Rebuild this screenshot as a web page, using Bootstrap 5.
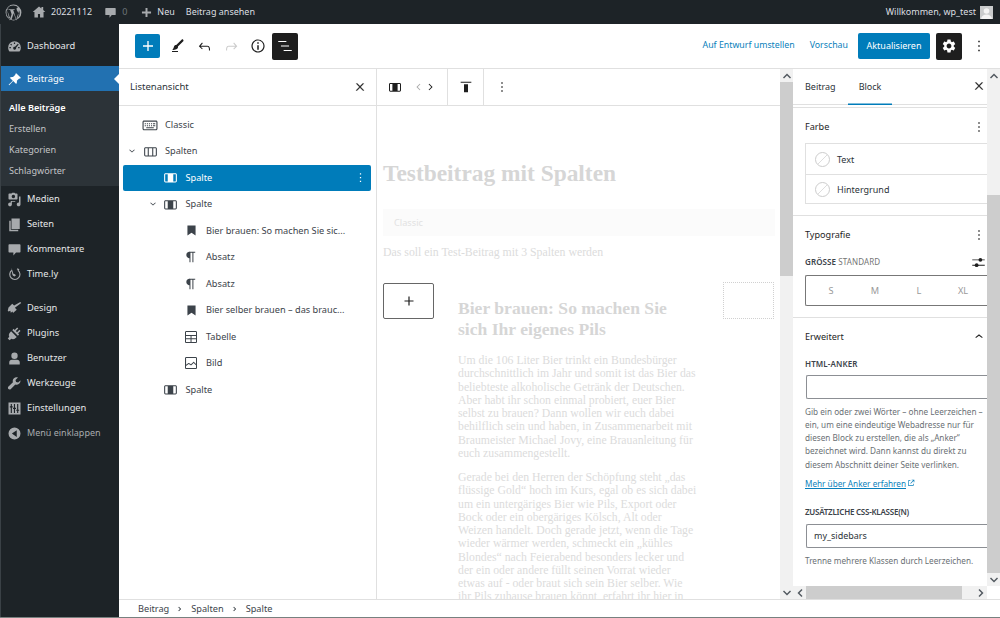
<!DOCTYPE html>
<html lang="de">
<head>
<meta charset="UTF-8">
<title>Beitrag bearbeiten</title>
<link href="https://cdn.jsdelivr.net/npm/bootstrap@5.3.0/dist/css/bootstrap.min.css" rel="stylesheet">
<style>
html, body { height: 618px; overflow: hidden; }
body { font-family: "Noto Sans", "Open Sans", sans-serif; font-size: 9px; color: #2c3338; background: #fff; }
svg { fill: currentColor; flex: none; display: block; }
.wp-frame { height: 618px; border-bottom: 1px solid #77817f; }

/* admin bar */
.wp-adminbar { height: 24px; background: #1d2327; color: #dcdfe1; flex: none; }
.wp-adminbar svg { color: #a7aaad; }
.wp-bar-item { white-space: nowrap; }
.wp-muted { color: #6d7478; }
.wp-avatar { width: 13px; height: 13px; background: #c9cbcc; overflow: hidden; position: relative; }

/* admin menu */
.wp-menu { width: 119px; background: #1d2327; flex: none; padding-top: 9px; border-left: 1px solid #3a4146; }
.wp-menu-item { height: 25px; padding-left: 6px; gap: 5px; color: #e6e8e9; font-size: 9.3px; padding-top: 1px; }
.wp-menu-item svg { color: #a7aaad; width: 15px; height: 15px; }
.wp-menu-item.is-current { background: #2271b1; color: #fff; position: relative; }
.wp-menu-item.is-current svg { color: #fff; }
.wp-menu-item.is-current::after { content: ""; position: absolute; right: 0; top: 8px; border: 5px solid transparent; border-right-color: #fff; border-left: 0; }
.wp-submenu { background: #2c3338; padding: 6px 0 5px; margin-bottom: 0; }
.wp-submenu div { height: 21px; line-height: 21px; padding-left: 8px; color: #c3c4c7; font-size: 9.1px; }
.wp-submenu .is-on { color: #fff; font-weight: 600; }
.wp-menu-sep { height: 9px; }

/* editor top */
.wp-header { height: 45px; border-bottom: 1px solid #e0e0e0; flex: none; padding: 0 0 0 16px; }
.wp-inserter { width: 25px; height: 24px; background: #007cba; color: #fff; border-radius: 2px; }
.wp-tool { color: #1e1e1e; }
.wp-tool-dark { width: 26px; height: 27px; background: #1e1e1e; color: #fff; border-radius: 2px; }
.wp-linkbtn { color: #0a7fbb; white-space: nowrap; font-size: 8.8px; }
.wp-update { width: 72px; height: 26px; background: #007cba; color: #fff; border-radius: 2px; }

/* list view */
.wp-listview { width: 258px; border-right: 1px solid #e0e0e0; flex: none; }
.wp-panel-head { height: 37px; border-bottom: 1px solid #e0e0e0; flex: none; }
.wp-x { stroke: currentColor; stroke-width: 1px; color: #1e1e1e; }
.wp-rows { padding: 5.5px 5px 0 4px; }
.wp-row { height: 26.5px; color: #3c434a; font-size: 9.2px; border-radius: 2px; white-space: nowrap; }
.wp-row.lv1 { padding-left: 3px; }
.wp-row.lv2 { padding-left: 23.5px; }
.wp-row.lv3 { padding-left: 44px; }
.wp-row .wp-chev { width: 14px; }
.wp-row .wp-ico { width: 20px; margin-right: 5px; }
.wp-row.is-sel { background: #007cba; color: #fff; }

/* canvas */
.wp-canvas { min-width: 0; }
.wp-block-tb { height: 37px; border-bottom: 1px solid #e0e0e0; flex: none; }
.wp-tb-group { height: 36px; border-right: 1px solid #e0e0e0; }
.wp-doc { padding: 0 6px 0 6px; overflow: hidden; color: #dcdcdc; font-family: "Liberation Serif", serif; min-height: 0; }
.wp-title { font-size: 23.4px; font-weight: 700; line-height: 28px; margin: 53px 0 22px; color: #d6d6d6; white-space: nowrap; }
.wp-classic { height: 27px; background: #fbfbfb; color: #e2e2e2; font-family: "Noto Sans", sans-serif; font-size: 9.2px; padding-left: 11px; margin-right: -1px; }
.wp-intro { font-size: 11.8px; line-height: 14px; margin: 9px 0 24px; white-space: nowrap; }
.wp-cols { gap: 24px; }
.wp-col-add { width: 51px; height: 36px; border: 1px solid #666; border-radius: 2px; color: #1e1e1e; flex: none; }
.wp-col-main { width: 241px; flex: none; padding-top: 15px; }
.wp-col-main h2 { font-size: 17.6px; font-weight: 700; line-height: 21px; color: #d6d6d6; margin: 0 0 14px; white-space: nowrap; }
.wp-col-main p { font-size: 11.76px; line-height: 13.25px; margin: 0 0 11px; white-space: nowrap; }
.wp-col-end { width: 51px; height: 37px; border: 1px dotted #d0d0d0; flex: none; margin-top: -1px; }

/* fake scrollbars */
.wp-vbar { width: 13px; background: #f1f1f1; flex: none; position: relative; color: #50575e; }
.wp-thumb { background: #cdcdcd; }
.wp-bar-arrow { height: 13px; }
.wp-hbar { height: 13px; background: #f1f1f1; flex: none; color: #50575e; }

/* settings sidebar */
.wp-side { width: 207px; flex: none; min-height: 0; }
.wp-side-main { width: 194px; overflow: hidden; }
.wp-tabs { height: 36px; border-bottom: 1px solid #e0e0e0; flex: none; position: relative; }
.wp-tab { height: 36px; line-height: 35px; padding: 0 12px; }
.wp-tab.is-active { box-shadow: inset 0 -1.5px 0 #007cba; padding: 0 11px; }
.wp-sect { border-bottom: 1px solid #e0e0e0; padding: 0 0 0 12px; }
.wp-sect-title { height: 18px; color: #1e1e1e; font-size: 9.1px; padding-top: 2px; }
.wp-colors { border: 1px solid #e0e0e0; border-right: 0; height: 61px; margin-top: 8px; }
.wp-colors > div { height: 30px; gap: 7px; padding-left: 9px; padding-top: 1px; }
.wp-colors > div + div { border-top: 1px solid #e0e0e0; padding-top: 0; }
.wp-swatch { width: 15px; height: 15px; }
.wp-label-up { font-size: 8px; font-weight: 600; color: #3c434a; text-transform: uppercase; letter-spacing: .1px; white-space: nowrap; }
.wp-sizes { height: 31px; border: 1px solid #777; border-right: 0; border-radius: 2px 0 0 2px; color: #9a9a9a; font-size: 9.2px; padding-left: 3px; }
.wp-sizes span { width: 44px; text-align: center; }
.wp-input { border: 1px solid #8c8f94; border-right: 0; border-radius: 2px 0 0 2px; height: 24px; padding-left: 7px; color: #2c3338; font-size: 9px; }
.wp-help { font-size: 8.2px; line-height: 13.3px; color: #6a6f74; white-space: nowrap; }
.wp-more { color: #0a7fbb; font-size: 8.2px; text-decoration: underline; }

/* breadcrumb */
.wp-crumbs { height: 18px; border-top: 1px solid #e0e0e0; padding-left: 19px; flex: none; font-size: 9.2px; color: #3c434a; gap: 6px; }
.wp-crumbs svg { stroke: currentColor; stroke-width: 1px; }
</style>
</head>
<body>
<svg width="0" height="0" class="position-absolute">
  <defs>
    <symbol id="i-plus" viewBox="0 0 24 24"><path d="M18 11.2h-5.2V6h-1.6v5.2H6v1.6h5.2V18h1.6v-5.2H18z"/></symbol>
    <symbol id="i-pen" viewBox="0 0 24 24"><path d="M4 20h8v-1.5H4V20zM18.9 3.5c-.6-.6-1.5-.6-2.1 0l-7.2 7.2c-.4-.1-.7 0-1.1.1-.5.2-1.5.7-1.9 2.2-.4 1.7-.8 2.2-1.1 2.7-.1.1-.2.3-.3.4l-.6 1.1H6c2 0 3.5-.4 4.7-1.4.8-.6 1.2-1.4 1.3-2.3 0-.3 0-.5-.1-.7L19 5.7c.5-.6.5-1.6-.1-2.2z"/></symbol>
    <symbol id="i-undo" viewBox="0 0 24 24"><path d="M18.3 11.7c-.6-.6-1.4-.9-2.3-.9H6.7l2.9-3.3-1.1-1-4.5 5L8.5 16l1-1-2.7-2.7H16c.5 0 .9.2 1.3.5 1 1 1 3.4 1 4.5v.3h1.5v-.2c0-1.5 0-4.3-1.5-5.7z"/></symbol>
    <symbol id="i-redo" viewBox="0 0 24 24"><path d="M15.6 6.5l-1.1 1 2.9 3.3H8c-.9 0-1.7.3-2.3.9-1.4 1.5-1.4 4.2-1.4 5.6v.2h1.5v-.3c0-1.1 0-3.5 1-4.5.3-.3.7-.5 1.3-.5h9.2L14.5 15l1.1 1.1 4.6-4.6-4.6-5z"/></symbol>
    <symbol id="i-info" viewBox="0 0 24 24"><path d="M12 3.2c-4.8 0-8.8 3.9-8.8 8.8 0 4.8 3.9 8.8 8.8 8.8 4.8 0 8.8-3.9 8.8-8.8 0-4.8-4-8.8-8.8-8.8zm0 16c-4 0-7.2-3.3-7.2-7.2C4.8 8 8 4.8 12 4.8s7.2 3.3 7.2 7.2c0 4-3.2 7.2-7.2 7.2zM11 17h2v-6h-2v6zm0-8h2V7h-2v2z"/></symbol>
    <symbol id="i-list" viewBox="0 0 24 24"><path d="M13.8 5.2H3v1.5h10.8V5.2zm-3.6 12v1.5H21v-1.5H10.2zm7.2-6H6.6v1.5h10.8v-1.5z"/></symbol>
    <symbol id="i-close" viewBox="0 0 24 24"><path d="M13 11.8l6.1-6.3-1-1-6.1 6.2-6.1-6.2-1 1 6.1 6.3-6.5 6.7 1 1 6.5-6.6 6.5 6.6 1-1z"/></symbol>
    <symbol id="i-more" viewBox="0 0 24 24"><path d="M13 19h-2v-2h2v2zm0-6h-2v-2h2v2zm0-6h-2V5h2v2z"/></symbol>
    <symbol id="i-cog" viewBox="0 0 24 24"><path d="M19.14 12.94c.04-.3.06-.61.06-.94 0-.32-.02-.64-.07-.94l2.03-1.58c.18-.14.23-.41.12-.61l-1.92-3.32c-.12-.22-.37-.29-.59-.22l-2.39.96c-.5-.38-1.03-.7-1.62-.94l-.36-2.54c-.04-.24-.24-.41-.48-.41h-3.84c-.24 0-.43.17-.47.41l-.36 2.54c-.59.24-1.13.57-1.62.94l-2.39-.96c-.22-.08-.47 0-.59.22L2.74 8.87c-.12.21-.08.47.12.61l2.03 1.58c-.05.3-.09.63-.09.94s.02.64.07.94l-2.03 1.58c-.18.14-.23.41-.12.61l1.92 3.32c.12.22.37.29.59.22l2.39-.96c.5.38 1.03.7 1.62.94l.36 2.54c.05.24.24.41.48.41h3.84c.24 0 .44-.17.47-.41l.36-2.54c.59-.24 1.13-.56 1.62-.94l2.39.96c.22.08.47 0 .59-.22l1.92-3.32c.12-.22.07-.47-.12-.61l-2.01-1.58zM12 15.6c-1.98 0-3.6-1.62-3.6-3.6s1.62-3.6 3.6-3.6 3.6 1.62 3.6 3.6-1.62 3.6-3.6 3.6z"/></symbol>
    <symbol id="i-columns" viewBox="0 0 24 24"><path d="M19 6H5c-1.1 0-2 .9-2 2v9c0 1.1.9 2 2 2h14c1.1 0 2-.9 2-2V8c0-1.1-.9-2-2-2zm-4.6 1.5v10H9.6v-10h4.8zM4.5 17V8c0-.3.2-.5.5-.5h3.1v10H5c-.3 0-.5-.2-.5-.5zm15 0c0 .3-.2.5-.5.5h-3.1v-10H19c.3 0 .5.2.5.5v9z"/></symbol>
    <symbol id="i-column" viewBox="0 0 24 24"><path d="M19 6H5c-1.1 0-2 .9-2 2v9c0 1.1.9 2 2 2h14c1.1 0 2-.9 2-2V8c0-1.1-.9-2-2-2zM4.5 17V8c0-.3.2-.5.5-.5h3.1v10H5c-.3 0-.5-.2-.5-.5zm15 0c0 .3-.2.5-.5.5h-3.1v-10H19c.3 0 .5.2.5.5v9z"/></symbol>
    <symbol id="i-keyboard" viewBox="0 0 24 24"><path d="M20 6H4c-1.1 0-2 .9-2 2v9c0 1.1.9 2 2 2h16c1.1 0 2-.9 2-2V8c0-1.1-.9-2-2-2zm.5 11c0 .3-.2.5-.5.5H4c-.3 0-.5-.2-.5-.5V8c0-.3.2-.5.5-.5h16c.3 0 .5.2.5.5v9zM5 9.5h1.5V11H5zm2.8 0h1.5V11H7.8zm2.700 0H12V11h-1.500zm2.800 0h1.500V11h-1.500zm2.700 0h3V11h-3zM5 12.200h1.500v1.500H5zm2.800 0h1.500v1.500H7.800zm2.700 0H12v1.500h-1.500zm2.800 0h1.500v1.500h-1.500zm2.700 0h3v1.500h-3zM7 15h10v1.200H7z"/></symbol>
    <symbol id="i-mark" viewBox="0 0 24 24"><path d="M5.500 4h13v16l-6.500-4.500L5.500 20z"/></symbol>
    <symbol id="i-para" viewBox="0 0 24 24"><path d="M18.300 4H9.900v-.1l-.9.2c-2.300.4-4 2.400-4 4.800s1.700 4.400 4 4.800l.7.1V20h1.500V5.500h2.900V20h1.500V5.500h2.700V4z"/></symbol>
    <symbol id="i-table" viewBox="0 0 24 24"><path fill-rule="evenodd" d="M5 3h14c1.100 0 2 .9 2 2v14c0 1.100-.9 2-2 2H5c-1.100 0-2-.9-2-2V5c0-1.100.9-2 2-2zm-.5 1.500V9h15V4.500zm0 6V14h6.800v-3.500zm8.300 0V14h6.700v-3.500zm-8.300 5v4h6.800v-4zm8.300 0v4h6.700v-4z"/></symbol>
    <symbol id="i-image" viewBox="0 0 24 24"><path d="M19 3H5C3.900 3 3 3.900 3 5v14c0 1.100.9 2 2 2h14c1.100 0 2-.9 2-2V5c0-1.100-.9-2-2-2zM5 4.500h14c.3 0 .5.200.5.500v8.400l-3-2.900c-.3-.3-.8-.3-1 0L11.900 14 9 12c-.3-.2-.6-.2-.8 0l-3.600 2.600V5c-.1-.3.100-.5.400-.5zm14 15H5c-.3 0-.5-.2-.5-.5v-2.400l4.100-3 3 1.900c.3.200.7.200.9-.1L16 12l3.500 3.400V19c0 .3-.2.500-.5.500z"/></symbol>
    <symbol id="i-chev-down" viewBox="0 0 24 24"><path d="M17.500 10l-5.500 5-5.500-5 1-1.100 4.500 4.100 4.500-4.100z"/></symbol>
    <symbol id="i-chev-up" viewBox="0 0 24 24"><path d="M6.500 12.400L12 8l5.500 4.400-.9 1.200L12 10l-4.500 3.600z"/></symbol>
    <symbol id="i-chev-left" viewBox="0 0 24 24"><path d="M14.600 7l-5 5 5 5 1-1-4-4 4-4z"/></symbol>
    <symbol id="i-chev-right" viewBox="0 0 24 24"><path d="M9.400 7l5 5-5 5-1-1 4-4-4-4z"/></symbol>
    <symbol id="i-align-top" viewBox="0 0 24 24"><path d="M4 4h16v1.500H4zM9 8h6v12H9z"/></symbol>
    <symbol id="i-sliders" viewBox="0 0 24 24"><path d="M2 7h20v1.500H2zM2 15.500h20V17H2z"/><circle cx="15" cy="7.700" r="3"/><circle cx="9" cy="16.200" r="3"/></symbol>
    <symbol id="i-ext" viewBox="0 0 12 12"><path d="M5 2H2.500C2 2 1.500 2.500 1.500 3v6.500c0 .5.500 1 1 1H9c.5 0 1-.5 1-1V7H9v2.500H2.500V3H5zM7 1v1h2.300L5 6.300l.7.7L10 2.700V5h1V1z"/></symbol>

    <!-- admin menu dashicons, redrawn on a 20 grid -->
    <symbol id="d-wp" viewBox="0 0 20 20"><path d="M10 .7a9.300 9.300 0 1 0 0 18.600A9.300 9.300 0 0 0 10 .7zm0 1a8.300 8.300 0 0 1 5.600 2.200c-1.200 0-2 1-2 2.100 0 1 .6 1.800 1.200 2.800.5.800 1 1.800 1 3.200 0 1-.4 2.100-.9 3.700l-1.100 3.700-4.100-12.200c.7 0 1.300-.1 1.300-.1.600-.1.500-1-.1-.9 0 0-1.800.1-3 .1-1.100 0-2.900-.1-2.900-.1-.6 0-.7.900-.1.900 0 0 .6.100 1.200.1l1.700 4.800-2.500 7.300L2.400 6.600c.7 0 1.300-.1 1.300-.1.600-.1.500-1-.1-.9l-1 .1A8.300 8.300 0 0 1 10 1.700zM1.700 10c0-1.200.3-2.300.7-3.300l4 10.800A8.300 8.300 0 0 1 1.700 10zm8.500 1l2.600 7.100a8.300 8.300 0 0 1-5.100.1zm6.100-4.300a8.300 8.300 0 0 1-3.100 11.100l2.500-7.300c.5-1.100.7-2.100.7-2.900 0-.3 0-.6-.1-.9z"/></symbol>
    <symbol id="d-home" viewBox="0 0 20 20"><path d="M10 2L1 10h2.500v8h5v-5h3v5h5v-8H19l-3-2.700V3h-2.500v2.100z"/></symbol>
    <symbol id="d-comment" viewBox="0 0 20 20"><path d="M3 3h14c.6 0 1 .4 1 1v9c0 .6-.4 1-1 1h-5l-3.500 4v-4H3c-.6 0-1-.4-1-1V4c0-.6.4-1 1-1z"/></symbol>
    <symbol id="d-addnew" viewBox="0 0 20 20"><path d="M8.500 3h3v5.500H17v3h-5.500V17h-3v-5.500H3v-3h5.500z"/></symbol>
    <symbol id="d-dash" viewBox="0 0 20 20"><path d="M10 3a8.500 8.500 0 0 0-8.500 8.500c0 2 .7 3.700 1.800 5.100h13.400a8.400 8.400 0 0 0 1.800-5.100A8.500 8.500 0 0 0 10 3zm-.8 1.700h1.600v2H9.200zM5.400 6.200l1.400 1.400-1.100 1.100-1.400-1.400zm9.100 0l1.100 1.100-3.500 4.300a2 2 0 1 1-1.400-1.300zM3.200 10.800h2v1.500h-2zm11.600 0h2v1.500h-2z"/></symbol>
    <symbol id="d-pin" viewBox="0 0 20 20"><path d="M12.300 1.500l6.200 6.200-1.200 1.200-1-.4-3.200 3.200c.4 1.500.1 3.100-.9 4.300L8.300 12 3 17.700l-.9-.8 5.600-5.300-4-3.900c1.200-1 2.800-1.300 4.300-.9L11.200 3.600l-.2-.9z"/></symbol>
    <symbol id="d-media" viewBox="0 0 20 20"><path d="M3 2h3l1-1h3l1 1h2c.6 0 1 .4 1 1v6c0 .6-.4 1-1 1H3c-.6 0-1-.4-1-1V3c0-.6.4-1 1-1zm5.500 1.700a2.300 2.300 0 1 0 0 4.600 2.300 2.300 0 0 0 0-4.600zM16 6h2v10.500c0 1.400-1.100 2.500-2.500 2.500S13 17.900 13 16.500s1.100-2.500 2.500-2.500l.5.100zM3 12h8v1H6.500v3.500c0 1.400-1.100 2.500-2.500 2.500S1.500 17.900 1.500 16.500 2.600 14 4 14c.4 0 .7 0 1 .2V12z"/></symbol>
    <symbol id="d-pages" viewBox="0 0 20 20"><path d="M6 2h11v14H6zM3 5h2v12h10v2H3z"/></symbol>
    <symbol id="d-clock" viewBox="0 0 20 20"><path d="M6 3.800l.6 1.500A6 6 0 1 0 14 5l.8-1.300A7.500 7.500 0 1 1 6 3.800zM6 1l2.500 8 2 .5L12 11l-2 1.500L8 11.500 7 9.500zM14 1.500l2.500 1.500-1 1.500L13 3z"/></symbol>
    <symbol id="d-brush" viewBox="0 0 20 20"><path d="M19 2.500l-1.300-1.300L9.500 6 7 3.500 2 8.500 1 13l1 1 2.500-1 .5 2.500 2.500-1.500.5 2 5-4.500-2.500-2.500z"/></symbol>
    <symbol id="d-plugin" viewBox="0 0 20 20"><path d="M13.500 2l-3.200 3.200-1.500-1.400-1.700 1.700 7.400 7.400 1.700-1.700-1.400-1.500L18 6.500l-1.400-1.400-3.200 3.100-1.600-1.600L15 3.400zM5.500 7L4 8.500c-1.700 1.800-2 4-1 5.700L1 16.500 3.500 19l2.300-2c1.700 1 3.900.7 5.700-1l1.500-1.500z"/></symbol>
    <symbol id="d-user" viewBox="0 0 20 20"><path d="M10 2a3.800 3.800 0 1 1 0 8.500A3.800 3.800 0 0 1 10 2zM3 18v-3c0-2 1.500-3.500 3.500-3.500h7c2 0 3.500 1.500 3.500 3.500v3z"/></symbol>
    <symbol id="d-wrench" viewBox="0 0 20 20"><path d="M18.200 5.500l-3.400 3.200-2.700-.7-.8-2.800L14.600 2c-2-.7-4.200-.2-5.600 1.200-1.300 1.300-1.700 3.300-1.100 5L2 14.100c-1 1-1 2.400-.1 3.300s2.400.9 3.300-.1l5.900-5.900c1.700.6 3.600.2 5-1.100 1.400-1.400 1.900-3 1.900-4.800z"/></symbol>
    <symbol id="d-set" viewBox="0 0 20 20"><path fill-rule="evenodd" d="M2 2h16v16H2zm3 2v3H3.800v1.500H5V16h1.500V8.500h1.200V7H6.500V4zm8.500 0v7.500h-1.200V13h1.200v3H15v-3h1.200v-1.500H15V4zM9.200 4v5H8v1.500h1.200V16h1.500v-5.500H12V9h-1.300V4z"/></symbol>
    <symbol id="d-collapse" viewBox="0 0 20 20"><path fill-rule="evenodd" d="M10 2a8 8 0 1 1 0 16 8 8 0 0 1 0-16zm3 3.500L6.500 10l6.500 4.500z"/></symbol>
    <symbol id="d-arrow-up" viewBox="0 0 10 10"><path d="M5 2.500l4 4-1 1-3-3-3 3-1-1z"/></symbol>
    <symbol id="d-arrow-down" viewBox="0 0 10 10"><path d="M5 7.500l-4-4 1-1 3 3 3-3 1 1z"/></symbol>
    <symbol id="d-arrow-left" viewBox="0 0 10 10"><path d="M2.500 5l4-4 1 1-3 3 3 3-1 1z"/></symbol>
    <symbol id="d-arrow-right" viewBox="0 0 10 10"><path d="M7.500 5l-4 4-1-1 3-3-3-3 1-1z"/></symbol>
  </defs>
</svg>

<div class="wp-frame d-flex flex-column">
  <!-- admin bar -->
  <div class="wp-adminbar d-flex align-items-center justify-content-between">
    <div class="d-flex align-items-center">
      <svg width="17" height="17" style="margin-left:5px"><use href="#d-wp"/></svg>
      <svg width="14" height="14" style="margin-left:10px"><use href="#d-home"/></svg>
      <span class="wp-bar-item" style="margin-left:5px">20221112</span>
      <svg width="13" height="13" style="margin-left:12px"><use href="#d-comment"/></svg>
      <span class="wp-bar-item wp-muted" style="margin-left:5px">0</span>
      <svg width="13" height="13" style="margin-left:13px"><use href="#d-addnew"/></svg>
      <span class="wp-bar-item" style="margin-left:4px">Neu</span>
      <span class="wp-bar-item" style="margin-left:11px">Beitrag ansehen</span>
    </div>
    <div class="d-flex align-items-center" style="padding-right:7px">
      <span class="wp-bar-item">Willkommen, wp_test</span>
      <div class="wp-avatar ms-1"><svg width="13" height="13" viewBox="0 0 13 13"><circle cx="6.500" cy="5" r="2.800" fill="#f3f3f3"/><path d="M1 13c.4-3 2.500-4.500 5.500-4.500S11.600 10 12 13z" fill="#f3f3f3"/></svg></div>
    </div>
  </div>

  <div class="d-flex flex-grow-1" style="min-height:0">
    <!-- admin menu -->
    <div class="wp-menu">
      <div class="wp-menu-item d-flex align-items-center"><svg><use href="#d-dash"/></svg>Dashboard</div>
      <div class="wp-menu-sep"></div>
      <div class="wp-menu-item is-current d-flex align-items-center" style="margin-top:-1px"><svg><use href="#d-pin"/></svg>Beiträge</div>
      <div class="wp-submenu">
        <div class="is-on">Alle Beiträge</div>
        <div>Erstellen</div>
        <div>Kategorien</div>
        <div>Schlagwörter</div>
      </div>
      <div class="wp-menu-item d-flex align-items-center"><svg><use href="#d-media"/></svg>Medien</div>
      <div class="wp-menu-item d-flex align-items-center"><svg><use href="#d-pages"/></svg>Seiten</div>
      <div class="wp-menu-item d-flex align-items-center"><svg><use href="#d-comment"/></svg>Kommentare</div>
      <div class="wp-menu-item d-flex align-items-center"><svg><use href="#d-clock"/></svg>Time.ly</div>
      <div class="wp-menu-sep"></div>
      <div class="wp-menu-item d-flex align-items-center"><svg><use href="#d-brush"/></svg>Design</div>
      <div class="wp-menu-item d-flex align-items-center"><svg><use href="#d-plugin"/></svg>Plugins</div>
      <div class="wp-menu-item d-flex align-items-center"><svg><use href="#d-user"/></svg>Benutzer</div>
      <div class="wp-menu-item d-flex align-items-center"><svg><use href="#d-wrench"/></svg>Werkzeuge</div>
      <div class="wp-menu-item d-flex align-items-center"><svg><use href="#d-set"/></svg>Einstellungen</div>
      <div class="wp-menu-item d-flex align-items-center" style="color:#a7aaad;font-size:9px"><svg><use href="#d-collapse"/></svg>Menü einklappen</div>
    </div>

    <!-- editor -->
    <div class="d-flex flex-column flex-grow-1" style="min-width:0">
      <div class="wp-header d-flex align-items-center justify-content-between">
        <div class="d-flex align-items-center">
          <div class="wp-inserter d-flex align-items-center justify-content-center"><svg width="20" height="20"><use href="#i-plus"/></svg></div>
          <svg class="wp-tool" width="18" height="18" style="margin-left:9px"><use href="#i-pen"/></svg>
          <svg class="wp-tool" width="17" height="17" style="margin-left:9px"><use href="#i-undo"/></svg>
          <svg width="17" height="17" style="margin-left:10px;color:#ccc"><use href="#i-redo"/></svg>
          <svg class="wp-tool" width="18" height="18" style="margin-left:9px"><use href="#i-info"/></svg>
          <div class="wp-tool-dark d-flex align-items-center justify-content-center" style="margin-left:5px"><svg width="18" height="18"><use href="#i-list"/></svg></div>
        </div>
        <div class="d-flex align-items-center">
          <span class="wp-linkbtn">Auf Entwurf umstellen</span>
          <span class="wp-linkbtn" style="margin-left:15px">Vorschau</span>
          <div class="wp-update d-flex align-items-center justify-content-center" style="margin-left:10px">Aktualisieren</div>
          <div class="wp-tool-dark d-flex align-items-center justify-content-center" style="margin-left:6px"><svg width="16" height="16"><use href="#i-cog"/></svg></div>
          <svg class="wp-tool" width="18" height="18" style="margin:0 12px 0 8px"><use href="#i-more"/></svg>
        </div>
      </div>

      <div class="d-flex flex-grow-1" style="min-height:0">
        <!-- list view -->
        <div class="wp-listview d-flex flex-column">
          <div class="wp-panel-head d-flex align-items-center justify-content-between" style="padding:0 10px 0 11px">
            <span style="font-size:9.500px;color:#2c3338">Listenansicht</span>
            <svg width="12" height="12" class="wp-x"><use href="#i-close"/></svg>
          </div>
          <div class="wp-rows">
            <div class="wp-row lv1 d-flex align-items-center"><span class="wp-chev"></span><span class="wp-ico d-flex justify-content-center"><svg width="18" height="18"><use href="#i-keyboard"/></svg></span>Classic</div>
            <div class="wp-row lv1 d-flex align-items-center"><span class="wp-chev"><svg width="12" height="12"><use href="#i-chev-down"/></svg></span><span class="wp-ico d-flex justify-content-center"><svg width="17" height="17"><use href="#i-columns"/></svg></span>Spalten</div>
            <div class="wp-row lv2 is-sel d-flex align-items-center justify-content-between"><span class="d-flex align-items-center"><span class="wp-chev"></span><span class="wp-ico d-flex justify-content-center"><svg width="17" height="17"><use href="#i-column"/></svg></span>Spalte</span><svg width="15" height="15" style="margin-right:3px"><use href="#i-more"/></svg></div>
            <div class="wp-row lv2 d-flex align-items-center"><span class="wp-chev"><svg width="12" height="12"><use href="#i-chev-down"/></svg></span><span class="wp-ico d-flex justify-content-center"><svg width="17" height="17"><use href="#i-column"/></svg></span>Spalte</div>
            <div class="wp-row lv3 d-flex align-items-center"><span class="wp-chev"></span><span class="wp-ico d-flex justify-content-center"><svg width="15" height="15"><use href="#i-mark"/></svg></span>Bier brauen: So machen Sie sic...</div>
            <div class="wp-row lv3 d-flex align-items-center"><span class="wp-chev"></span><span class="wp-ico d-flex justify-content-center"><svg width="16" height="16"><use href="#i-para"/></svg></span>Absatz</div>
            <div class="wp-row lv3 d-flex align-items-center"><span class="wp-chev"></span><span class="wp-ico d-flex justify-content-center"><svg width="16" height="16"><use href="#i-para"/></svg></span>Absatz</div>
            <div class="wp-row lv3 d-flex align-items-center"><span class="wp-chev"></span><span class="wp-ico d-flex justify-content-center"><svg width="15" height="15"><use href="#i-mark"/></svg></span>Bier selber brauen – das brauc...</div>
            <div class="wp-row lv3 d-flex align-items-center"><span class="wp-chev"></span><span class="wp-ico d-flex justify-content-center"><svg width="16" height="16"><use href="#i-table"/></svg></span>Tabelle</div>
            <div class="wp-row lv3 d-flex align-items-center"><span class="wp-chev"></span><span class="wp-ico d-flex justify-content-center"><svg width="16" height="16"><use href="#i-image"/></svg></span>Bild</div>
            <div class="wp-row lv2 d-flex align-items-center"><span class="wp-chev"></span><span class="wp-ico d-flex justify-content-center"><svg width="17" height="17"><use href="#i-column"/></svg></span>Spalte</div>
          </div>
        </div>

        <!-- canvas -->
        <div class="wp-canvas d-flex flex-column" style="width:403px;flex:none">
          <div class="wp-block-tb d-flex align-items-center">
            <div class="wp-tb-group d-flex align-items-center" style="width:71px;padding-left:10px">
              <svg width="16" height="16" class="wp-tool"><use href="#i-column"/></svg>
              <svg width="16" height="16" style="margin-left:7px;color:#aaa"><use href="#i-chev-left"/></svg>
              <svg width="16" height="16" style="margin-left:-3px;color:#1e1e1e"><use href="#i-chev-right"/></svg>
            </div>
            <div class="wp-tb-group d-flex align-items-center justify-content-center" style="width:36px">
              <svg width="16" height="16" class="wp-tool"><use href="#i-align-top"/></svg>
            </div>
            <svg width="16" height="16" class="wp-tool" style="margin-left:10px"><use href="#i-more"/></svg>
          </div>
          <div class="wp-doc flex-grow-1">
            <h1 class="wp-title">Testbeitrag mit Spalten</h1>
            <div class="wp-classic d-flex align-items-center">Classic</div>
            <p class="wp-intro">Das soll ein Test-Beitrag mit 3 Spalten werden</p>
            <div class="wp-cols d-flex align-items-start">
              <div class="wp-col-add d-flex align-items-center justify-content-center"><svg width="18" height="18"><use href="#i-plus"/></svg></div>
              <div class="wp-col-main">
                <h2>Bier brauen: So machen Sie<br>sich Ihr eigenes Pils</h2>
                <p>Um die 106 Liter Bier trinkt ein Bundesbürger<br>durchschnittlich im Jahr und somit ist das Bier das<br>beliebteste alkoholische Getränk der Deutschen.<br>Aber habt ihr schon einmal probiert, euer Bier<br>selbst zu brauen? Dann wollen wir euch dabei<br>behilflich sein und haben, in Zusammenarbeit mit<br>Braumeister Michael Jovy, eine Brauanleitung für<br>euch zusammengestellt.</p>
                <p>Gerade bei den Herren der Schöpfung steht „das<br>flüssige Gold“ hoch im Kurs, egal ob es sich dabei<br>um ein untergäriges Bier wie Pils, Export oder<br>Bock oder ein obergäriges Kölsch, Alt oder<br>Weizen handelt. Doch gerade jetzt, wenn die Tage<br>wieder wärmer werden, schmeckt ein „kühles<br>Blondes“ nach Feierabend besonders lecker und<br>der ein oder andere füllt seinen Vorrat wieder<br>etwas auf - oder braut sich sein Bier selber. Wie<br>ihr Pils zuhause brauen könnt, erfahrt ihr hier in</p>
              </div>
              <div class="wp-col-end"></div>
            </div>
          </div>
        </div>

        <!-- canvas scrollbar -->
        <div class="wp-vbar d-flex flex-column">
          <div class="wp-bar-arrow d-flex align-items-center justify-content-center"><svg width="10" height="10"><use href="#d-arrow-up"/></svg></div>
          <div class="wp-thumb" style="height:194px"></div>
          <div class="flex-grow-1"></div>
          <div class="wp-bar-arrow d-flex align-items-center justify-content-center"><svg width="10" height="10"><use href="#d-arrow-down"/></svg></div>
        </div>

        <!-- settings sidebar -->
        <div class="wp-side d-flex flex-column">
          <div class="d-flex flex-grow-1" style="min-height:0">
            <div class="wp-side-main d-flex flex-column">
              <div class="wp-tabs d-flex align-items-center">
                <div class="wp-tab">Beitrag</div>
                <div class="wp-tab is-active">Block</div>
                <svg width="12" height="12" class="wp-x position-absolute" style="right:2px;top:11px"><use href="#i-close"/></svg>
              </div>
              <div class="wp-sect" style="margin-top:2px;border-top:1px solid #e0e0e0;padding-top:9px;padding-bottom:11px">
                <div class="wp-sect-title d-flex align-items-center justify-content-between">Farbe<svg width="16" height="16" class="wp-tool"><use href="#i-more"/></svg></div>
                <div class="wp-colors">
                  <div class="d-flex align-items-center"><svg class="wp-swatch" viewBox="0 0 15 15"><circle cx="7.500" cy="7.500" r="7" fill="none" stroke="#ccc"/><path d="M3 12L12 3" stroke="#ddd"/></svg>Text</div>
                  <div class="d-flex align-items-center"><svg class="wp-swatch" viewBox="0 0 15 15"><circle cx="7.500" cy="7.500" r="7" fill="none" stroke="#ccc"/><path d="M3 12L12 3" stroke="#ddd"/></svg>Hintergrund</div>
                </div>
              </div>
              <div class="wp-sect" style="padding-top:9px;padding-bottom:11px">
                <div class="wp-sect-title d-flex align-items-center justify-content-between">Typografie<svg width="16" height="16" class="wp-tool"><use href="#i-more"/></svg></div>
                <div class="d-flex align-items-center justify-content-between" style="margin-top:12px;height:14px;padding-right:1px">
                  <span class="wp-label-up">Größe <span class="fw-normal" style="color:#757575">Standard</span></span>
                  <svg width="15" height="15" class="wp-tool"><use href="#i-sliders"/></svg>
                </div>
                <div class="wp-sizes d-flex align-items-center" style="margin-top:6px"><span>S</span><span>M</span><span>L</span><span>XL</span></div>
              </div>
              <div class="wp-sect border-0" style="padding-top:9px">
                <div class="wp-sect-title d-flex align-items-center justify-content-between">Erweitert<svg width="16" height="16" class="wp-tool"><use href="#i-chev-up"/></svg></div>
                <div class="wp-label-up" style="margin-top:13px;line-height:12px">HTML-Anker</div>
                <div class="wp-input" style="margin-top:5px;margin-left:1px"></div>
                <div class="wp-help" style="margin-top:5.500px">Gib ein oder zwei Wörter – ohne Leerzeichen –<br>ein, um eine eindeutige Webadresse nur für<br>diesen Block zu erstellen, die als „Anker“<br>bezeichnet wird. Dann kannst du direkt zu<br>diesem Abschnitt deiner Seite verlinken.</div>
                <div class="d-flex align-items-center" style="margin-top:6px;line-height:13px"><span class="wp-more">Mehr über Anker erfahren</span><svg width="8" height="8" style="margin-left:1px;color:#0a7fbb"><use href="#i-ext"/></svg></div>
                <div class="wp-label-up" style="margin-top:16.500px;line-height:12px;letter-spacing:-.25px">Zusätzliche CSS-Klasse(n)</div>
                <div class="wp-input d-flex align-items-center" style="margin-top:5.500px;margin-left:1px">my_sidebars</div>
                <div class="wp-help" style="margin-top:6px">Trenne mehrere Klassen durch Leerzeichen.</div>
              </div>
            </div>
            <div class="wp-vbar d-flex flex-column">
              <div class="wp-bar-arrow d-flex align-items-center justify-content-center"><svg width="10" height="10"><use href="#d-arrow-up"/></svg></div>
              <div style="height:113px"></div>
              <div class="wp-thumb flex-grow-1"></div>
              <div class="wp-bar-arrow d-flex align-items-center justify-content-center"><svg width="10" height="10"><use href="#d-arrow-down"/></svg></div>
            </div>
          </div>
          <div class="wp-hbar d-flex">
            <div class="wp-bar-arrow d-flex align-items-center justify-content-center" style="width:13px"><svg width="10" height="10"><use href="#d-arrow-left"/></svg></div>
            <div class="wp-thumb" style="width:156px"></div>
            <div class="flex-grow-1"></div>
            <div class="wp-bar-arrow d-flex align-items-center justify-content-center" style="width:13px"><svg width="10" height="10"><use href="#d-arrow-right"/></svg></div>
            <div style="width:13px;background:#fff"></div>
          </div>
        </div>
      </div>

      <div class="wp-crumbs d-flex align-items-center">
        <span>Beitrag</span><svg width="10" height="10"><use href="#i-chev-right"/></svg>
        <span>Spalten</span><svg width="10" height="10"><use href="#i-chev-right"/></svg>
        <span>Spalte</span>
      </div>
    </div>
  </div>
</div>
<script src="https://cdn.jsdelivr.net/npm/bootstrap@5.3.0/dist/js/bootstrap.bundle.min.js"></script>
</body>
</html>
